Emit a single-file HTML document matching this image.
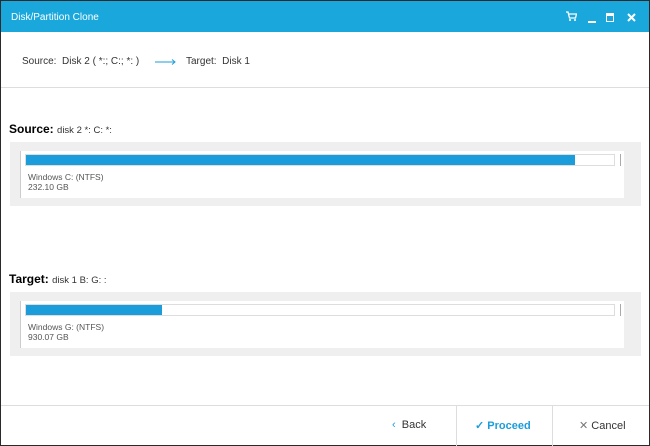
<!DOCTYPE html><html><head><style>
body{margin:0;width:650px;height:446px;overflow:hidden;font-family:"Liberation Sans",sans-serif;background:#fff}
.frame{position:absolute;left:0;top:0;width:648px;height:444px;border:1px solid #2a2a2a;background:#fff}
.tb{position:absolute;left:0;top:0;width:648px;height:31px;background:#1aa8dc;color:#fff;font-size:10px}
.t{position:absolute;left:10px;top:11px}
.a{position:absolute;font-size:10px;color:#333}
.hl{position:absolute;left:0;width:648px;height:1px;background:#ddd}
.box{position:absolute;left:9px;width:631px;height:64px;background:#efefef}
.in{position:absolute;left:10px;top:9px;width:603px;height:47px;background:#fff;border-left:1px solid #ccc}
.bar{position:absolute;left:4px;top:3px;width:588px;height:10px;border:1px solid #ddd;background:#fff}
.fill{position:absolute;left:0;top:0;height:10px;background:#1b9ddb}
.lbl{position:absolute;left:7px;top:21px;font-size:8.5px;color:#555;line-height:10px}
.rt{position:absolute;left:599px;top:3px;width:1px;height:12px;background:#aaa}
.btn{position:absolute;top:418px;font-size:11px}
.vl{position:absolute;top:405px;width:1px;height:40px;background:#ddd}
</style></head><body><div class="frame">
<div class="tb"><span class="t">Disk/Partition Clone</span>
<svg style="position:absolute;left:564px;top:10px" width="12" height="11"><path d="M1 1h2l1.5 6h6l1-4H4" stroke="#fff" fill="none" stroke-width="1.3"/><circle cx="5" cy="9" r="1" fill="#fff"/><circle cx="10" cy="9" r="1" fill="#fff"/></svg>
<div style="position:absolute;left:587px;top:20px;width:8px;height:2px;background:#fff"></div>
<div style="position:absolute;left:605px;top:12px;width:6px;height:5px;border:1.5px solid #fff;border-top-width:3px"></div>
<svg style="position:absolute;left:626px;top:12px" width="9" height="9"><path d="M1 1L8 8M8 1L1 8" stroke="#fff" stroke-width="2"/></svg>
</div>
<div class="a" style="left:21px;top:55px">Source:&nbsp; Disk 2 ( *:; C:; *: )</div>
<svg style="position:absolute;left:154px;top:57px" width="22" height="8"><path d="M0 4H20M17 1.5L20 4L17 6.5" stroke="#1b9ddb" fill="none"/></svg>
<div class="a" style="left:185px;top:55px">Target:&nbsp; Disk 1</div>
<div class="hl" style="top:86px"></div>
<div style="position:absolute;left:8px;top:121px;font-size:12px"><b>Source:</b> <span style="font-size:9.5px;color:#333">disk 2 *: C: *:</span></div>
<div class="box" style="top:141px"><div class="in"><div class="bar"><div class="fill" style="width:549px"></div></div><div class="rt"></div><div class="lbl">Windows C: (NTFS)<br>232.10 GB</div></div></div>
<div style="position:absolute;left:8px;top:271px;font-size:12px"><b>Target:</b> <span style="font-size:9.5px;color:#333">disk 1 B: G: :</span></div>
<div class="box" style="top:291px"><div class="in"><div class="bar"><div class="fill" style="width:136px"></div></div><div class="rt"></div><div class="lbl">Windows G: (NTFS)<br>930.07 GB</div></div></div>
<div class="hl" style="top:404px"></div>
<div class="vl" style="left:455px"></div><div class="vl" style="left:551px"></div>
<div class="btn" style="left:391px;color:#333"><span style="color:#1b9ddb">&#8249;</span>&nbsp; Back</div>
<div class="btn" style="left:474px;color:#1b9ddb;font-weight:bold">&#10003; Proceed</div>
<div class="btn" style="left:578px;color:#333"><span style="color:#777">&#10005;</span> Cancel</div>
</div></body></html>
